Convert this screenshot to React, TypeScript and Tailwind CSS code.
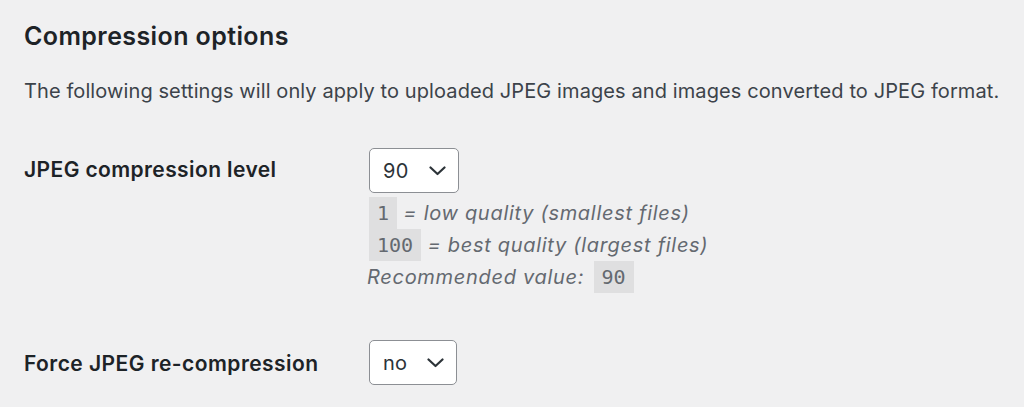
function Chevron() {
  return (
    <svg width="17" height="10" viewBox="0 0 17 10" fill="none" className="text-[#2c3338]">
      <polyline points="1.5,1.5 8.5,8 15.5,1.5" stroke="currentColor" strokeWidth="2.2" strokeLinecap="round" strokeLinejoin="round" />
    </svg>
  );
}

function Select({ value, width }: { value: string; width: string }) {
  return (
    <div
      className={`flex h-[45px] items-center justify-between rounded-[5px] border border-[#8c8f94] bg-white pl-[13px] pr-[12px] text-[20px] text-[#2c3338] ${width}`}
    >
      <span className="tracking-[0.3px]">{value}</span>
      <Chevron />
    </div>
  );
}

function Code({ children, className = "" }: { children: React.ReactNode; className?: string }) {
  return (
    <code
      className={`inline-block bg-[#dfdfe0] px-[8px] align-top font-['DejaVu_Sans_Mono',monospace] text-[20px] not-italic leading-[32px] tracking-normal text-[#646970] ${className}`}
    >
      {children}
    </code>
  );
}

export default function App() {
  return (
    <div className="min-h-[407px] bg-[#f0f0f1] px-6 font-['Inter',sans-serif] text-[#3c434a]">
      <h2 className="pt-[20px] text-[25px] font-semibold leading-[32px] tracking-[0.4px] text-[#1d2327]">
        Compression options
      </h2>
      <p className="mt-[25px] whitespace-nowrap text-[20px] leading-[28px] tracking-[0.1px]">
        The following settings will only apply to uploaded JPEG images and images converted to JPEG format.
      </p>

      <div className="mt-[43px] grid grid-cols-[345px_1fr]">
        <div className="pt-[8px] text-[21px] font-semibold leading-[28px] tracking-[0.4px] text-[#1d2327]">
          JPEG compression level
        </div>
        <div>
          <Select value="90" width="w-[90px]" />
          <div className="mt-[4px] text-[20px] italic leading-[32px] tracking-[0.7px] text-[#646970]">
            <div>
              <Code>1</Code> = low quality (smallest files)
            </div>
            <div>
              <Code>100</Code> = best quality (largest files)
            </div>
            <div className="-ml-[2px]">
              Recommended value: <Code className="ml-[3px]">90</Code>
            </div>
          </div>
        </div>

        <div className="mt-[47px] pt-[10px] text-[21px] font-semibold leading-[28px] tracking-[0.45px] text-[#1d2327]">
          Force JPEG re-compression
        </div>
        <div className="mt-[47px]">
          <Select value="no" width="w-[88px]" />
        </div>
      </div>
    </div>
  );
}
